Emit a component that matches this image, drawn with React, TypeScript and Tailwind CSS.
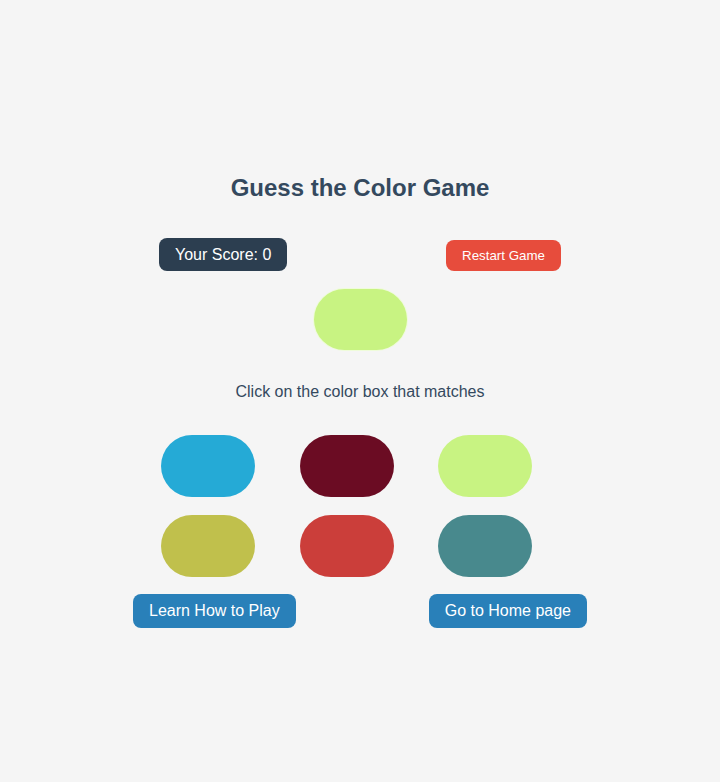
const colors = ["#25aad6", "#6b0c23", "#c8f382", "#c0c04c", "#cb3e3a", "#48898d"];

const App = () => {
  return (
    <div className="min-h-[782px] bg-[#f5f5f5] flex flex-col items-center pt-[172px] font-['Liberation_Sans',Arial,sans-serif]">
      <h1 className="text-2xl leading-8 font-bold text-[#34495e]">
        Guess the Color Game
      </h1>

      <div className="w-[454px] mt-[34px] px-[26px] flex justify-between items-end">
        <div className="h-[33px] px-4 flex items-center rounded-lg bg-[#2c3e50] text-white text-base">
          Your Score: 0
        </div>
        <button className="h-[31px] px-4 rounded-lg bg-[#e74c3c] text-white text-[13.333px]">
          Restart Game
        </button>
      </div>

      <div className="mt-[17px] w-[95px] h-[63px] rounded-full border border-white/70 bg-[#c8f382]" />

      <p className="mt-[29px] text-base leading-6 text-[#34495e]">
        Click on the color box that matches
      </p>

      <div className="w-[454px] mt-[31px] pl-[28px]">
        <div className="grid grid-cols-[94px_94px_94px] gap-x-[44.5px] gap-y-[18px]">
          {colors.map((c, idx) => (
            <div
              key={idx}
              className="w-[94px] h-[62px] rounded-full"
              style={{ backgroundColor: c }}
            />
          ))}
        </div>
      </div>

      <div className="w-[454px] mt-[17px] flex justify-between">
        <button className="h-[34px] px-4 rounded-lg bg-[#2980b9] text-white text-base">
          Learn How to Play
        </button>
        <button className="h-[34px] px-4 rounded-lg bg-[#2980b9] text-white text-base">
          Go to Home page
        </button>
      </div>
    </div>
  );
};

export default App;
